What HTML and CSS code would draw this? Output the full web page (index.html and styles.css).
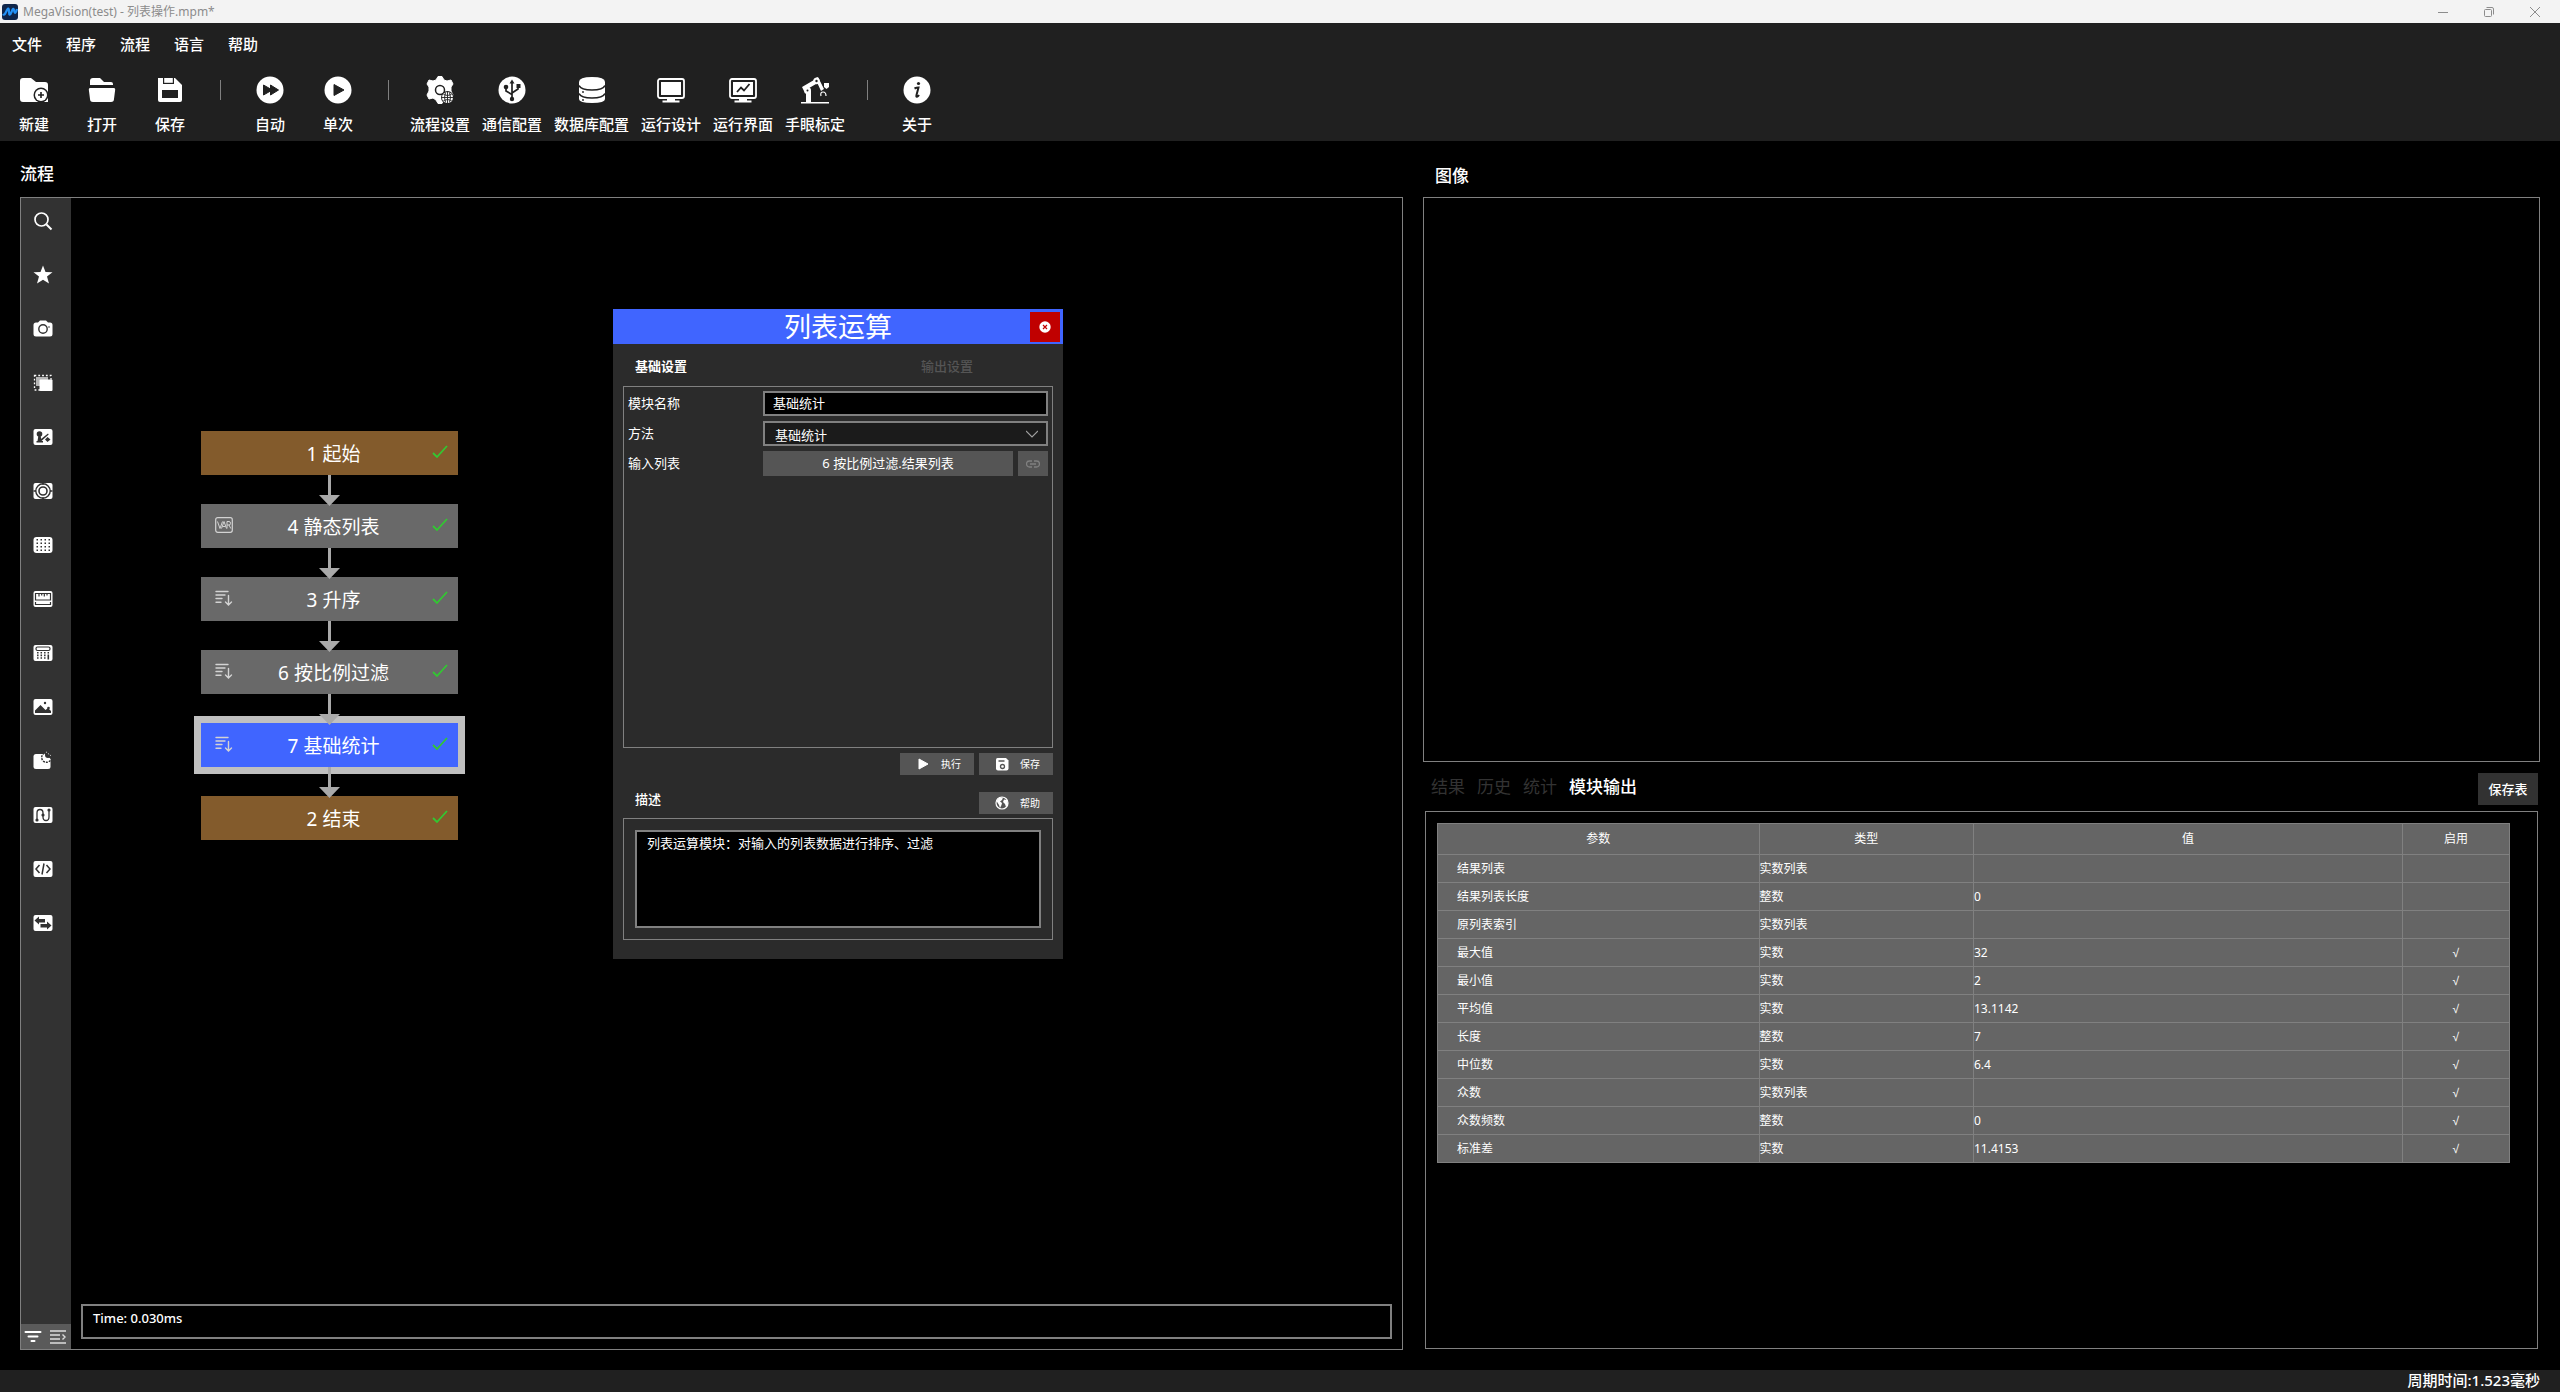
FILE: index.html
```html
<!DOCTYPE html>
<html lang="zh-CN">
<head>
<meta charset="utf-8">
<title>MegaVision(test) - 列表操作.mpm*</title>
<link rel="stylesheet" href="styles.css">
</head>
<body>
<svg class="defs" aria-hidden="true">
  <symbol id="i-check" viewBox="0 0 16 14"><path d="M1 8l4 4L15 1" fill="none" stroke="#32c832" stroke-width="1.8"/></symbol>
  <symbol id="i-sort" viewBox="0 0 18 16"><g stroke="currentColor" stroke-width="1.4" fill="none" stroke-linecap="round"><path d="M1 1.5h12M1 5h9M1 8.500h6M1 12.200h5M13.500 5.500v9M10.500 12l3 3 3-3"/></g></symbol>
  <symbol id="i-arrow" viewBox="0 0 21 31"><path d="M9 0h3v20h9L10.500 31 0 20h9z" fill="#a9a9a9"/></symbol>
</svg>

<header class="titlebar">
  <svg class="logo" viewBox="0 0 16 16"><rect width="16" height="16" rx="3" fill="#10264a"/><path d="M1 10c1.500 2 2.500-1 4-4S7 5 7 8s1 4 2.500 0 2-4 2.700-1S14 9 15 5" fill="none" stroke="#2492f5" stroke-width="2.200"/></svg>
  <span class="window-title">MegaVision(test) - 列表操作.mpm*</span>
  <div class="window-controls">
    <button aria-label="最小化"><svg viewBox="0 0 10 10"><path d="M0 5.500h10"/></svg></button>
    <button aria-label="还原"><svg viewBox="0 0 10 10"><rect x=".5" y="2.500" width="7" height="7" rx="1"/><path d="M2.500.5H8a1.500 1.500 0 0 1 1.500 1.500v5.500"/></svg></button>
    <button aria-label="关闭"><svg viewBox="0 0 10 10"><path d="M0 0l10 10M10 0L0 10"/></svg></button>
  </div>
</header>

<div class="ribbon">
  <nav class="menu">
    <button>文件</button><button>程序</button><button>流程</button><button>语言</button><button>帮助</button>
  </nav>
  <div class="toolbar">
    <button class="tool"><svg viewBox="0 0 28 28"><path d="M0 5a3 3 0 0 1 3-3h8l5 4h9a3 3 0 0 1 3 3v17H3a3 3 0 0 1-3-3z" fill="#fff"/><circle cx="21" cy="19" r="7.500" fill="#202020"/><circle cx="21" cy="19" r="6" fill="#fff"/><path d="M21 16v6M18 19h6" stroke="#202020" stroke-width="1.600"/></svg><span>新建</span></button>
    <button class="tool"><svg viewBox="0 0 28 28"><path d="M2 9V5a3 3 0 0 1 3-3h7l4 4h7a2 2 0 0 1 2 2v1zM2 12h24q1.300 0 1.200 1.500L26 23a3 3 0 0 1-3 3H5a3 3 0 0 1-3-3L.8 13.500Q.7 12 2 12z" fill="#fff"/></svg><span>打开</span></button>
    <button class="tool"><svg viewBox="0 0 28 28"><path d="M2 2h17l7 7v15a2 2 0 0 1-2 2H4a2 2 0 0 1-2-2z" fill="#fff"/><path d="M7 2v6h11V2M6 14h16v8H6z" fill="#202020"/><path d="M8.200 2h8.600v4.800H8.200z" fill="#fff"/></svg><span>保存</span></button>
    <i class="sep"></i>
    <button class="tool"><svg viewBox="0 0 28 28"><circle cx="14" cy="14" r="13.500" fill="#fff"/><path d="M7.500 9l7 4V9l8 5-8 5v-4l-7 4z" fill="#202020" stroke="#202020" stroke-linejoin="round"/></svg><span>自动</span></button>
    <button class="tool"><svg viewBox="0 0 28 28"><circle cx="14" cy="14" r="13.500" fill="#fff"/><path d="M10 8.500l10 5.500-10 5.500z" fill="#202020" stroke="#202020" stroke-linejoin="round"/></svg><span>单次</span></button>
    <i class="sep"></i>
    <button class="tool"><svg viewBox="0 0 28 28"><path d="M10 4l2-3.500h4L18 4l3 1 4-1 2 4-2 3v4l2 4-2 4-4-1-3 2-2 3.500h-4L10 24l-3-2-4 1-2-4 2-4v-4L1 8l2-4 4 1z" fill="#fff" stroke="#fff" stroke-linejoin="round"/><circle cx="14" cy="14" r="4.500" fill="#fff" stroke="#202020" stroke-width="1.500"/><circle cx="21.500" cy="21.500" r="6.500" fill="#202020"/><circle cx="21.500" cy="21.500" r="5.500" fill="#fff"/><path d="M16 21.500h11M21.500 16v11M17.500 18.500q4 2 8 0M17.500 24.500q4-2 8 0M19.500 16.500q-2 5 0 10M23.500 16.500q2 5 0 10" fill="none" stroke="#202020" stroke-width=".9"/></svg><span>流程设置</span></button>
    <button class="tool"><svg viewBox="0 0 28 28"><circle cx="14" cy="14" r="13.500" fill="#fff"/><path d="M14 6v17M14 18.500l-6-3.500v-4M14 17l6-4v-3" fill="none" stroke="#202020" stroke-width="1.700"/><path d="M11.500 7.500L14 3.500l2.500 4zM18.500 8h4v4h-4z" fill="#202020"/><circle cx="8" cy="11" r="2.300" fill="#202020"/><circle cx="14" cy="23" r="2.200" fill="#202020"/></svg><span>通信配置</span></button>
    <button class="tool"><svg viewBox="0 0 28 28"><path d="M1 6q0-5 13-5t13 5v17q0 4-13 4T1 23z" fill="#fff"/><path d="M1 9.500q2 4.500 13 4.500t13-4.500M1 17.500q2 4.500 13 4.500t13-4.500" fill="none" stroke="#202020" stroke-width="1.700"/><circle cx="5" cy="16" r=".9" fill="#202020"/><circle cx="5" cy="24" r=".9" fill="#202020"/></svg><span>数据库配置</span></button>
    <button class="tool"><svg viewBox="0 0 28 28"><rect x="1" y="3" width="26" height="19" rx="2" fill="none" stroke="#fff" stroke-width="1.800"/><path d="M4 6h20v13H4z" fill="#fff"/><path d="M13 22h2v3h-2zM5.500 24.500h17v2h-17zM10 23h8v2h-8z" fill="#fff"/></svg><span>运行设计</span></button>
    <button class="tool"><svg viewBox="0 0 28 28"><rect x="1" y="3" width="26" height="19" rx="2" fill="none" stroke="#fff" stroke-width="1.800"/><path d="M4 6h20v13H4z" fill="#fff"/><path d="M8 16l4-4.500 3 3L20.500 8" fill="none" stroke="#202020" stroke-width="1.800"/><path d="M5.500 24.500h17v2h-17zM10 22h8v3h-8z" fill="#fff"/></svg><span>运行界面</span></button>
    <button class="tool"><svg viewBox="0 0 28 28"><path d="M0 26h28v1.500H0zM5 15h5v12H5z" fill="#fff"/><path d="M1 11l12-7 2 4-12 7zM14 2l3-1 6 12-3 2z" fill="#fff"/><circle cx="6.500" cy="14.500" r="3.500" fill="#fff"/><circle cx="15.500" cy="5" r="3.200" fill="#fff"/><circle cx="6.500" cy="14.500" r="1" fill="#202020"/><circle cx="15.500" cy="5" r="1.200" fill="#202020"/><path d="M23 7h5v4l-2.500 2L23 11z" fill="#fff"/><path d="M20 20q-1-4 2-4t3 4" fill="none" stroke="#fff" stroke-width="1.200"/></svg><span>手眼标定</span></button>
    <i class="sep"></i>
    <button class="tool"><svg viewBox="0 0 28 28"><circle cx="14" cy="14" r="13.500" fill="#fff"/><circle cx="15.500" cy="7.500" r="1.600" fill="#202020"/><path d="M11.500 12.500q2-1 4-1L13.500 19q-.5 2 .5 1.800T16 19" fill="none" stroke="#202020" stroke-width="2"/></svg><span>关于</span></button>
  </div>
</div>

<main class="workspace">
  <section class="flow">
    <h2 class="panel-title">流程</h2>
    <div class="flow-panel">
      <aside class="sidebar">
        <button aria-label="搜索"><svg viewBox="0 0 20 20"><circle cx="8.500" cy="8.500" r="6.500" fill="none" stroke="#fff" stroke-width="1.700"/><path d="M13.500 13.500l5 5" stroke="#fff" stroke-width="2"/></svg></button>
        <button aria-label="收藏"><svg viewBox="0 0 20 20"><path d="M10 .5l2.500 6.500 7 .3-5.500 4.300 2 7L10 14.800l-6 3.800 2-7L.5 7.300l7-.3z" fill="#fff"/></svg></button>
        <button aria-label="相机"><svg viewBox="0 0 20 20"><path d="M.5 6q0-2.500 2.500-2.500h2L7 1.500h6l2 2h2q2.500 0 2.500 2.500v9q0 2.500-2.500 2.500H3Q.5 17.500.5 15z" fill="#fff"/><circle cx="10" cy="10" r="4.200" fill="none" stroke="#323232" stroke-width="1.400"/><circle cx="16" cy="8" r=".8" fill="#323232"/></svg></button>
        <button aria-label="图像处理"><svg viewBox="0 0 20 20"><path d="M1.500 2.500H18V17H1.500z" fill="none" stroke="#fff" stroke-width="1.300" stroke-dasharray="1.800 2"/><rect x="3" y="4" width="12" height="9" fill="#b5b5b5"/><rect x="6.500" y="6.500" width="13" height="11.500" rx="1" fill="#fff"/></svg></button>
        <button aria-label="定位"><svg viewBox="0 0 20 20"><rect x=".5" y="2" width="19" height="16" rx="2" fill="#fff"/><circle cx="6.500" cy="7" r="2.800" fill="#323232"/><path d="M5.500 8h2l1 6H10v1.500H3.500V14h1zM8 12l7-5.500.7 1L8.500 14zM14.500 10l3 2.500-3 2.500-2.500-2.500z" fill="#323232"/></svg></button>
        <button aria-label="标定"><svg viewBox="0 0 20 20"><rect x=".5" y="2" width="19" height="16" rx="2" fill="#fff"/><circle cx="10" cy="10" r="7.200" fill="none" stroke="#323232" stroke-width="1.400"/><circle cx="10" cy="10" r="4" fill="none" stroke="#323232" stroke-width="1.600"/><path d="M10 2v2M10 16v2M.5 10h2.500M17 10h2.500" stroke="#323232" stroke-width="1.300"/></svg></button>
        <button aria-label="阵列"><svg viewBox="0 0 20 20"><rect x=".5" y="2" width="19" height="16" rx="3" fill="#fff"/><path d="M3 4.800h14M3 8.300h14M3 11.700h14M3 15.200h14" stroke="#323232" stroke-width="1.500" stroke-dasharray="1.500 2.500" stroke-dashoffset="-.5"/></svg></button>
        <button aria-label="测量"><svg viewBox="0 0 20 20"><rect x=".5" y="2" width="19" height="16" rx="2" fill="#fff"/><path d="M2.500 4.500h15V11h-15zM6 4.500v3M8.700 4.500v2M11.300 4.500v3M14 4.500v2M2.500 13v2.500h15V13" fill="none" stroke="#323232" stroke-width="1.200"/></svg></button>
        <button aria-label="计算"><svg viewBox="0 0 20 20"><rect x=".5" y="2" width="19" height="16" rx="2" fill="#fff"/><rect x="3" y="4" width="14" height="3.500" rx="1.500" fill="none" stroke="#323232" stroke-width="1.200"/><path d="M4.800 9v7.500M8.300 9v7.500M11.800 9v7.500M15.300 9v3" stroke="#323232" stroke-width="1.500" stroke-dasharray="1.600 1"/><path d="M15.300 12v4.500" stroke="#323232" stroke-width="1.600"/></svg></button>
        <button aria-label="图像"><svg viewBox="0 0 20 20"><rect x=".5" y="2" width="19" height="16" rx="2" fill="#fff"/><path d="M2 16v-2.500L7.500 8l5 5 2.500-2 3 3V16z" fill="#323232"/><circle cx="12" cy="6" r="1.200" fill="#323232"/><circle cx="15.500" cy="11" r="1.300" fill="#323232"/></svg></button>
        <button aria-label="缺陷"><svg viewBox="0 0 20 20"><rect x=".5" y="3" width="17" height="15" rx="2.500" fill="#fff"/><circle cx="13.500" cy="6.500" r="4.800" fill="#fff" stroke="#323232" stroke-width="1.400" stroke-dasharray="2 1"/><path d="M11 2h8v7z" fill="#323232"/><circle cx="15" cy="4" r="3" fill="#323232"/><path d="M13 .8l5 4" stroke="#fff" stroke-dasharray="1 1.500"/></svg></button>
        <button aria-label="轨迹"><svg viewBox="0 0 20 20"><rect x=".5" y="2" width="19" height="16" rx="2" fill="#fff"/><path d="M4 15V8q0-3.500 3-3.500T10 8v4q0 3.500 3 3.500T16 12V5" fill="none" stroke="#323232" stroke-width="1.300"/><circle cx="4" cy="15" r="1.600" fill="#323232"/><circle cx="10" cy="10" r="1.600" fill="#323232"/><circle cx="16" cy="5" r="1.600" fill="#323232"/></svg></button>
        <button aria-label="脚本"><svg viewBox="0 0 20 20"><rect x=".5" y="2" width="19" height="16" rx="2" fill="#fff"/><path d="M6.500 6L3 10l3.500 4M13.500 6l3.500 4-3.500 4M11 4.500L9 15.500" fill="none" stroke="#323232" stroke-width="1.500"/></svg></button>
        <button aria-label="通信"><svg viewBox="0 0 20 20"><rect x=".5" y="2" width="19" height="16" rx="2" fill="#fff"/><path d="M1.500 7.500L6 3.500V6h6v3.500H6v2zM18.500 12.500L14 8.500V11H7.500v3.500H14v2z" fill="#323232"/></svg></button>
        <div class="sidebar-foot">
          <button aria-label="筛选"><svg viewBox="0 0 18 14"><path d="M1.500 2h15M4.500 6.500h9M7.500 11h3" stroke="#fff" stroke-width="2" stroke-linecap="round"/></svg></button>
          <button aria-label="展开"><svg viewBox="0 0 18 14"><path d="M1 1h16M1 5h10M1 9h10M1 13h16M13.500 4.500l2.500 2.500-2.500 2.500" fill="none" stroke="#ddd" stroke-width="1.400"/></svg></button>
        </div>
      </aside>
      <div class="canvas">
        <div class="graph">
          <div class="node terminal"><span>1 起始</span><svg class="check"><use href="#i-check"/></svg></div>
          <svg class="link"><use href="#i-arrow"/></svg>
          <div class="node"><svg class="kind" viewBox="0 0 18 16"><rect x=".7" y=".7" width="16.600" height="14.600" rx="2" fill="none" stroke="currentColor" stroke-width="1.200"/><path d="M2.500 4.500L5 11.500l2.500-7M6.500 11.500L9 4.500l2.500 7M7.500 9.500h3M12 11.500v-7h2q1.500 0 1.500 1.800T14 8h-2M14 8l1.800 3.500" fill="none" stroke="currentColor"/></svg><span>4 静态列表</span><svg class="check"><use href="#i-check"/></svg></div>
          <svg class="link"><use href="#i-arrow"/></svg>
          <div class="node"><svg class="kind"><use href="#i-sort"/></svg><span>3 升序</span><svg class="check"><use href="#i-check"/></svg></div>
          <svg class="link"><use href="#i-arrow"/></svg>
          <div class="node"><svg class="kind"><use href="#i-sort"/></svg><span>6 按比例过滤</span><svg class="check"><use href="#i-check"/></svg></div>
          <svg class="link"><use href="#i-arrow"/></svg>
          <div class="node selected"><svg class="kind"><use href="#i-sort"/></svg><span>7 基础统计</span><svg class="check"><use href="#i-check"/></svg></div>
          <svg class="link"><use href="#i-arrow"/></svg>
          <div class="node terminal"><span>2 结束</span><svg class="check"><use href="#i-check"/></svg></div>
        </div>

        <form class="dialog" role="dialog" aria-labelledby="dialog-title">
          <div class="dialog-head">
            <h3 id="dialog-title">列表运算</h3>
            <button type="button" class="close" aria-label="关闭"><svg viewBox="0 0 12 12"><circle cx="6" cy="6" r="5.700" fill="#fff"/><path d="M4 4l4 4M8 4L4 8" stroke="#c00000" stroke-width="1.200"/></svg></button>
          </div>
          <div class="dialog-tabs"><button type="button" class="active">基础设置</button><button type="button">输出设置</button></div>
          <div class="fields">
            <label for="name">模块名称</label><input id="name" type="text" value="基础统计">
            <label for="method">方法</label>
            <div class="select"><select id="method"><option>基础统计</option></select><svg viewBox="0 0 12 8"><path d="M0 1l6 6 6-6" fill="none" stroke="#a0a0a0" stroke-width="1.200"/></svg></div>
            <label for="source">输入列表</label>
            <div class="source"><button type="button" id="source">6 按比例过滤.结果列表</button><button type="button" aria-label="链接"><svg viewBox="0 0 14 8"><path d="M6 1H3.500a3 3 0 0 0 0 6H6M8 1h2.500a3 3 0 0 1 0 6H8M4 4h6" fill="none" stroke="#808080" stroke-width="1.300"/></svg></button></div>
          </div>
          <div class="actions">
            <button type="button" class="small"><svg viewBox="0 0 14 14"><path d="M3 2l9 5-9 5z" fill="#fff" stroke="#fff" stroke-linejoin="round"/></svg>执行</button>
            <button type="button" class="small"><svg viewBox="0 0 14 14"><path d="M1 2.500Q1 1 2.500 1H11l2.500 2.500v8q0 2-2 2H3q-2 0-2-2z" fill="#fff"/><path d="M3.500 4h6" stroke="#555" stroke-width="1.500"/><circle cx="7.500" cy="9.500" r="2" fill="none" stroke="#555" stroke-width="1.300"/></svg>保存</button>
          </div>
          <div class="desc-head">
            <label for="desc">描述</label>
            <button type="button" class="small"><svg viewBox="0 0 14 14"><circle cx="7" cy="7" r="6" fill="none" stroke="#fff" stroke-width="1.200"/><path d="M1.500 5l3-3.500L8 1.500 7 4 5 5.500l2 1.500-.5 2L5 12 4 9zM9 3.500l3 .5 1 4-2 3-1-3-2-2z" fill="#fff"/></svg>帮助</button>
          </div>
          <div class="desc"><textarea id="desc">列表运算模块：对输入的列表数据进行排序、过滤</textarea></div>
        </form>

        <output class="log">Time: 0.030ms</output>
      </div>
    </div>
  </section>

  <section class="side">
    <h2 class="panel-title">图像</h2>
    <div class="image-view"></div>
    <div class="result-head">
      <div class="result-tabs"><button>结果</button><button>历史</button><button>统计</button><button class="active">模块输出</button></div>
      <button class="save-table">保存表</button>
    </div>
    <div class="result-panel">
      <table>
        <colgroup><col class="c-name"><col class="c-type"><col class="c-value"><col class="c-on"></colgroup>
        <thead><tr><th>参数</th><th>类型</th><th>值</th><th>启用</th></tr></thead>
        <tbody>
          <tr><td>结果列表</td><td>实数列表</td><td></td><td></td></tr>
          <tr><td>结果列表长度</td><td>整数</td><td>0</td><td></td></tr>
          <tr><td>原列表索引</td><td>实数列表</td><td></td><td></td></tr>
          <tr><td>最大值</td><td>实数</td><td>32</td><td>√</td></tr>
          <tr><td>最小值</td><td>实数</td><td>2</td><td>√</td></tr>
          <tr><td>平均值</td><td>实数</td><td>13.1142</td><td>√</td></tr>
          <tr><td>长度</td><td>整数</td><td>7</td><td>√</td></tr>
          <tr><td>中位数</td><td>实数</td><td>6.4</td><td>√</td></tr>
          <tr><td>众数</td><td>实数列表</td><td></td><td>√</td></tr>
          <tr><td>众数频数</td><td>整数</td><td>0</td><td>√</td></tr>
          <tr><td>标准差</td><td>实数</td><td>11.4153</td><td>√</td></tr>
        </tbody>
      </table>
    </div>
  </section>
</main>

<footer class="statusbar">周期时间:1.523毫秒</footer>
</body>
</html>
```

FILE: styles.css
```css
* { box-sizing: border-box; }

body {
  margin: 0;
  min-height: 100vh;
  display: flex;
  flex-direction: column;
  background: #000;
  color: #fff;
  font: 13px/20px "Noto Sans", "Noto Sans CJK SC", sans-serif;
}

button, input, select, textarea {
  margin: 0;
  padding: 0;
  border: 0;
  border-radius: 0;
  background: none;
  color: inherit;
  font: inherit;
}

button { cursor: pointer; }
svg { display: block; flex: none; }
h2, h3 { margin: 0; font-weight: 400; }
.defs { position: absolute; width: 0; height: 0; }

/* Window title bar */
.titlebar {
  display: flex;
  align-items: center;
  height: 23px;
  padding-left: 2px;
  background: #f3f3f3;
  color: #8c8c8c;
}
.logo { width: 16px; height: 16px; }
.window-title { margin-left: 5px; font: 12px/20px "Noto Sans", "Noto Sans CJK SC", sans-serif; }
.window-controls { display: flex; margin-left: auto; padding-right: 2px; }
.window-controls button { width: 46px; height: 20px; display: grid; place-items: center; }
.window-controls svg { width: 10px; height: 10px; fill: none; stroke: #8c8c8c; }

/* Menu and toolbar */
.ribbon { height: 118px; background: #202020; font-size: 15px; font-weight: 500; }
.menu { display: flex; gap: 24px; padding: 9px 12px 0; height: 44px; }
.menu button { height: 24px; line-height: 24px; }
.toolbar { display: flex; align-items: flex-start; }
.tool {
  min-width: 68px;
  padding: 9px 6px 0;
  display: flex;
  flex-direction: column;
  align-items: center;
  gap: 8px;
  line-height: 24px;
  white-space: nowrap;
}
.tool svg { width: 28px; height: 28px; }
.sep { width: 1px; height: 20px; margin: 13px 15px 0 16px; background: #808080; }

/* Work area */
.workspace {
  flex: 1;
  display: grid;
  grid-template-columns: 1383fr 1117fr;
  gap: 20px;
  padding: 0 20px 20px;
}
.flow { display: flex; flex-direction: column; min-width: 0; }
.side { display: grid; grid-template-rows: 56px 565fr 49px 538fr; min-width: 0; padding-bottom: 1px; }
.panel-title { height: 56px; padding-top: 21px; font-size: 17px; line-height: 24px; font-weight: 500; }
.side .panel-title { padding: 23px 12px 0; }

.flow-panel { flex: 1; display: flex; border: 1px solid #808080; }
.sidebar { width: 50px; display: flex; flex-direction: column; gap: 20px; padding-top: 6px; background: #323232; }
.sidebar > button { height: 34px; display: grid; place-items: center; padding-right: 6px; }
.sidebar > button svg { width: 20px; height: 20px; }
.sidebar-foot { display: flex; margin-top: auto; background: #5a5a5a; }
.sidebar-foot button { width: 25px; height: 25px; display: grid; place-items: center; padding-right: 1px; }
.sidebar-foot svg { width: 18px; height: 14px; }

.canvas { position: relative; flex: 1; display: flex; flex-direction: column; justify-content: flex-end; padding: 10px; }
.log { display: block; height: 35px; padding: 2px 10px; border: 2px solid #808080; font-weight: 500; }

/* Flow graph */
.graph { position: absolute; left: 130px; top: 233px; width: 257px; display: flex; flex-direction: column; align-items: center; }
.node {
  position: relative;
  width: 100%;
  height: 44px;
  display: grid;
  place-items: center;
  padding: 1px 0 0 8px;
  background: #696969;
  font-size: 19px;
  line-height: 28px;
}
.node.terminal { background: #835b2c; }
.node.selected { background: #4065ff; box-shadow: 0 0 0 7px #c0c0c0; }
.kind { position: absolute; left: 14px; top: 13px; width: 18px; height: 16px; color: #d3d3d3; }
.check { position: absolute; right: 10px; top: 14px; width: 16px; height: 14px; }
.link { position: relative; z-index: 1; width: 21px; height: 31px; margin-bottom: -2px; }

/* Module dialog */
.dialog { position: absolute; left: 542px; top: 111px; width: 450px; padding-bottom: 19px; background: #2b2b2b; }
.dialog-head { position: relative; height: 35px; background: #4065ff; text-align: center; }
.dialog-head h3 { font-size: 27px; line-height: 35px; }
.close { position: absolute; right: 3px; top: 3px; width: 30px; height: 30px; display: grid; place-items: center; background: #c00000; }
.close svg { width: 12px; height: 12px; }
.dialog-tabs { display: grid; grid-template-columns: 286px 1fr; padding: 12px 22px 10px; }
.dialog-tabs button { justify-self: start; color: #555; font-weight: 500; }
.dialog-tabs .active { color: #fff; font-weight: 700; }
.fields {
  height: 362px;
  margin: 0 10px;
  padding: 4px;
  border: 1px solid #808080;
  display: grid;
  grid-template-columns: 135px 1fr;
  grid-auto-rows: 25px;
  row-gap: 5px;
  line-height: 25px;
}
.fields input { min-width: 0; height: 25px; padding: 0 8px; border: 2px solid #808080; background: #000; }
.select { position: relative; }
.select select { width: 100%; height: 25px; padding: 0 10px 2px; border: 2px solid #808080; background: #1b1b1b; appearance: none; }
.select svg { position: absolute; right: 10px; top: 9px; width: 12px; height: 8px; pointer-events: none; }
.source { display: grid; grid-template-columns: 1fr 30px; gap: 5px; }
.source button { display: grid; place-items: center; background: #555; }
.source svg { width: 14px; height: 8px; }
.actions { display: flex; justify-content: flex-end; gap: 5px; padding: 5px 10px 0; }
.small { width: 74px; height: 22px; display: flex; align-items: center; justify-content: flex-end; gap: 11px; padding-right: 13px; background: #555; font-size: 10px; line-height: 22px; }
.small svg { width: 14px; height: 14px; }
.desc-head { display: flex; justify-content: space-between; padding: 17px 10px 4px 22px; }
.desc-head label { line-height: 14px; font-weight: 500; }
.desc { height: 122px; margin: 0 10px; padding: 11px; border: 1px solid #808080; }
.desc textarea { display: block; width: 100%; height: 98px; padding: 1px 10px; border: 2px solid #808080; background: #000; resize: none; }

/* Image view and results */
.image-view { border: 1px solid #808080; }
.result-head { display: flex; justify-content: space-between; align-items: center; padding: 0 2px 0 8px; }
.result-tabs { display: flex; gap: 12px; font-size: 17px; line-height: 24px; }
.result-tabs button { color: #333; }
.result-tabs .active { color: #fff; font-weight: 500; }
.save-table { width: 60px; height: 32px; margin-top: 5px; background: #323232; font-weight: 500; }
.result-panel { margin: 0 2px; padding: 11px 27px 11px 11px; border: 1px solid #808080; }
.result-panel table { width: 100%; table-layout: fixed; border-collapse: collapse; background: #656565; font-size: 12px; line-height: 20px; }
.c-name { width: 30%; }
.c-type { width: 20%; }
.c-value { width: 40%; }
.c-on { width: 10%; }
th, td { height: 28px; padding: 0; border: 1px solid #808080; font-weight: 400; text-align: left; }
th { height: 31px; text-align: center; }
td:first-child { padding-left: 19px; }
td:last-child { font-family: "Liberation Sans", sans-serif; text-align: center; }

.statusbar { height: 22px; padding: 0 20px; background: #202020; font-size: 15px; line-height: 20px; font-weight: 500; text-align: right; }
```
